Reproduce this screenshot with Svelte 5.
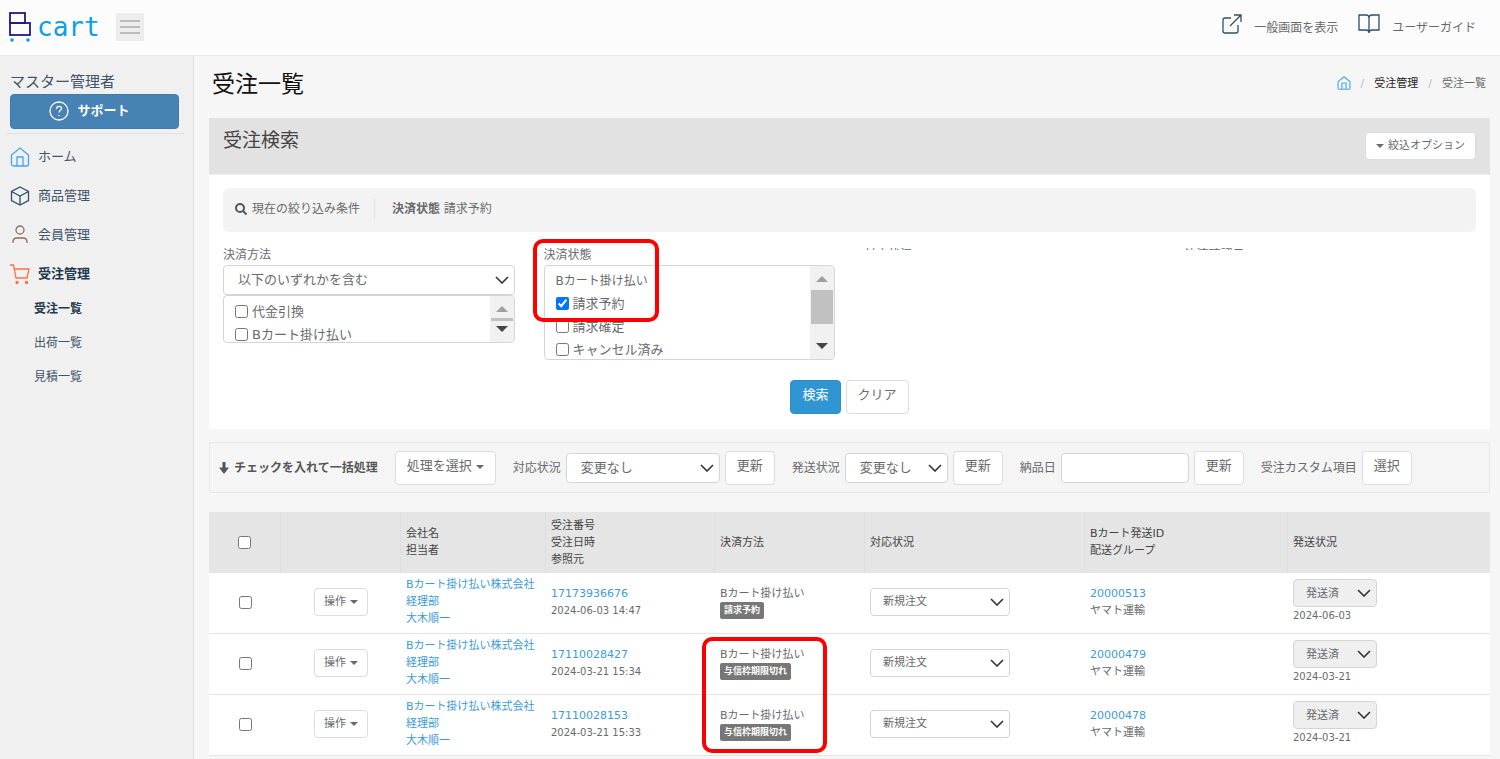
<script lang="ts">
  type Order = {
    id: string;
    orderedAt: string;
    badge: string;
    shippingId: string;
    shippedOn: string;
  };

  const orders: Order[] = [
    { id: '17173936676', orderedAt: '2024-06-03 14:47', badge: '請求予約', shippingId: '20000513', shippedOn: '2024-06-03' },
    { id: '17110028427', orderedAt: '2024-03-21 15:34', badge: '与信枠期限切れ', shippingId: '20000479', shippedOn: '2024-03-21' },
    { id: '17110028153', orderedAt: '2024-03-21 15:33', badge: '与信枠期限切れ', shippingId: '20000478', shippedOn: '2024-03-21' },
  ];

  const subMenu = ['受注一覧', '出荷一覧', '見積一覧'];

  let methods = $state([
    { label: '代金引換', checked: false },
    { label: 'Bカート掛け払い', checked: false },
  ]);
  let statuses = $state([
    { label: '請求予約', checked: true },
    { label: '請求確定', checked: false },
    { label: 'キャンセル済み', checked: false },
  ]);
</script>

{#snippet home()}
  <svg class="icon" viewBox="0 0 20 20" aria-hidden="true">
    <path d="M1.500 8 10 1l8.500 7v9a2 2 0 0 1-2 2h-13a2 2 0 0 1-2-2z" />
    <path d="M7 19v-9h6v9" />
  </svg>
{/snippet}

{#snippet chevron()}
  <svg class="chevron" viewBox="0 0 14 8" aria-hidden="true"><path d="M1 1l6 6 6-6" /></svg>
{/snippet}

{#snippet scrollbar(kind: string)}
  <div class="scrollbar" aria-hidden="true">
    <svg class="arrow up" viewBox="0 0 12 6"><path d="M0 6l6-6 6 6z" /></svg>
    <span class="thumb {kind}"></span>
    <svg class="arrow" viewBox="0 0 12 6"><path d="M0 0l6 6 6-6z" /></svg>
  </div>
{/snippet}

<div class="page">
  <header class="topbar">
    <a class="logo" href="#top" aria-label="Bcart">
      <svg class="logo-mark" viewBox="0 0 22 30" aria-hidden="true">
        <rect x="1" y="1" width="15" height="10" />
        <rect x="1" y="11" width="20" height="12" />
        <circle cx="3" cy="28" r="1.800" />
        <circle cx="19" cy="28" r="1.800" />
      </svg>
      <span>cart</span>
    </a>
    <button class="burger" aria-label="メニュー"><i></i><i></i><i></i></button>
    <nav class="top-links">
      <a href="#shop">
        <svg class="icon" viewBox="0 0 20 20" aria-hidden="true">
          <path d="M9 4H3a2 2 0 0 0-2 2v11a2 2 0 0 0 2 2h11a2 2 0 0 0 2-2v-6" />
          <path d="M8 12 19 1M12 1h7v7" />
        </svg>
        一般画面を表示
      </a>
      <a href="#guide">
        <svg class="icon book" viewBox="0 0 22 20" aria-hidden="true">
          <path d="M11 4c0-2-1-3-3-3H1v15h7c2 0 3 1 3 3 0-2 1-3 3-3h7V1h-7c-2 0-3 1-3 3zM11 4v15" />
        </svg>
        ユーザーガイド
      </a>
    </nav>
  </header>

  <div class="shell">
    <aside class="sidebar">
      <p class="account">マスター管理者</p>
      <button class="support">
        <svg class="icon" viewBox="0 0 20 20" aria-hidden="true">
          <circle cx="10" cy="10" r="9" />
          <path d="M7.500 8c0-3.500 5-3.500 5-.5 0 2-2.500 2-2.500 4M10 14v1" />
        </svg>
        サポート
      </button>
      <ul class="menu">
        <li><a class="home" href="#home">{@render home()}ホーム</a></li>
        <li>
          <a href="#products">
            <svg class="icon" viewBox="0 0 20 20" aria-hidden="true">
              <path d="M10 1l8.500 4.500v9L10 19l-8.500-4.500v-9zM1.500 5.500 10 10l8.500-4.500M10 10v9" />
            </svg>
            商品管理
          </a>
        </li>
        <li>
          <a class="members" href="#members">
            <svg class="icon" viewBox="0 0 20 20" aria-hidden="true">
              <circle cx="10" cy="5" r="4" />
              <path d="M3 18v-1c0-3 1.500-4 4-4h6c2.500 0 4 1 4 4v1" />
            </svg>
            会員管理
          </a>
        </li>
        <li>
          <a class="orders" href="#orders">
            <svg class="icon" viewBox="0 0 20 20" aria-hidden="true">
              <path d="M0 1h3.500l2.500 13h11l2-9H4.500" />
              <circle class="dot" cx="7" cy="18.500" r="1" />
              <circle class="dot" cx="16.500" cy="18.500" r="1" />
            </svg>
            受注管理
          </a>
          <ul class="submenu">
            {#each subMenu as item, i}
              <li><a href="#orders" class:current={i === 0}>{item}</a></li>
            {/each}
          </ul>
        </li>
      </ul>
    </aside>

    <main>
      <div class="title-row">
        <h1>受注一覧</h1>
        <nav class="breadcrumb">
          <a class="home" href="#home" aria-label="ホーム">{@render home()}</a>
          <span class="slash">/</span>
          <a class="parent" href="#orders">受注管理</a>
          <span class="slash">/</span>
          <span>受注一覧</span>
        </nav>
      </div>

      <section class="panel">
        <div class="panel-head">
          <h2>受注検索</h2>
          <button class="btn small option"><i class="caret"></i>絞込オプション</button>
        </div>
        <div class="panel-body">
          <div class="conditions">
            <svg class="search" viewBox="0 0 12 12" aria-hidden="true">
              <circle cx="5" cy="5" r="4" />
              <path d="M8 8l3.500 3.500" />
            </svg>
            <span class="current-label">現在の絞り込み条件</span>
            <span><b>決済状態</b> 請求予約</span>
          </div>

          <div class="fields">
            <div class="field">
              <label for="method">決済方法</label>
              <div class="select">
                <select id="method"><option>以下のいずれかを含む</option></select>
                {@render chevron()}
              </div>
              <div class="list short">
                <div class="options">
                  {#each methods as m}
                    <label><input type="checkbox" bind:checked={m.checked} />{m.label}</label>
                  {/each}
                </div>
                {@render scrollbar('thin')}
              </div>
            </div>
            <div class="field" role="group" aria-labelledby="status-label">
              <span id="status-label" class="label">決済状態</span>
              <div class="list tall">
                <div class="options">
                  <p>Bカート掛け払い</p>
                  {#each statuses as s}
                    <label><input type="checkbox" bind:checked={s.checked} />{s.label}</label>
                  {/each}
                </div>
                {@render scrollbar('thick')}
              </div>
              <span class="marker filter-marker"></span>
            </div>
            <div class="field folded"><span class="label">対応状況</span></div>
            <div class="field folded"><span class="label">決済確認日</span></div>
          </div>

          <div class="actions">
            <button class="btn primary">検索</button>
            <button class="btn">クリア</button>
          </div>
        </div>
      </section>

      <section class="batch">
        <strong>
          <svg class="down" viewBox="0 0 10 12" aria-hidden="true"><path d="M3.500 0h3v5.500H10L5 12 0 5.500h3.500z" /></svg>
          チェックを入れて一括処理
        </strong>
        <button class="btn">処理を選択<i class="caret"></i></button>
        <div class="group">
          <label for="batch-status">対応状況</label>
          <div class="select wide">
            <select id="batch-status"><option>変更なし</option></select>
            {@render chevron()}
          </div>
          <button class="btn">更新</button>
        </div>
        <div class="group">
          <label for="batch-shipping">発送状況</label>
          <div class="select medium">
            <select id="batch-shipping"><option>変更なし</option></select>
            {@render chevron()}
          </div>
          <button class="btn">更新</button>
        </div>
        <div class="group">
          <label for="batch-date">納品日</label>
          <input id="batch-date" type="text" />
          <button class="btn">更新</button>
        </div>
        <div class="group">
          <span>受注カスタム項目</span>
          <button class="btn">選択</button>
        </div>
      </section>

      <table>
        <colgroup>
          <col class="c-check" />
          <col class="c-action" />
          <col class="c-company" />
          <col class="c-number" />
          <col class="c-payment" />
          <col class="c-status" />
          <col class="c-shipping" />
          <col />
        </colgroup>
        <thead>
          <tr>
            <th class="center"><input type="checkbox" aria-label="すべて選択" /></th>
            <th></th>
            <th>会社名<br />担当者</th>
            <th>受注番号<br />受注日時<br />参照元</th>
            <th>決済方法</th>
            <th>対応状況</th>
            <th>Bカート発送ID<br />配送グループ</th>
            <th>発送状況</th>
          </tr>
        </thead>
        <tbody>
          {#each orders as order, i}
            <tr>
              <td class="center"><input type="checkbox" aria-label={order.id} /></td>
              <td class="center"><button class="btn small">操作<i class="caret"></i></button></td>
              <td>
                <a href="#company">Bカート掛け払い株式会社<br />経理部</a><br />
                <a href="#person">大木順一</a>
              </td>
              <td><a href="#order">{order.id}</a><br /><span class="date">{order.orderedAt}</span></td>
              <td>
                Bカート掛け払い
                <span class="badge">{order.badge}</span>
                {#if i === 1}<span class="marker row-marker"></span>{/if}
              </td>
              <td>
                <div class="select small status">
                  <select aria-label="対応状況"><option>新規注文</option></select>
                  {@render chevron()}
                </div>
              </td>
              <td><a href="#shipping">{order.shippingId}</a><br />ヤマト運輸</td>
              <td>
                <div class="select small shipped">
                  <select aria-label="発送状況"><option>発送済</option></select>
                  {@render chevron()}
                </div>
                <span class="date">{order.shippedOn}</span>
              </td>
            </tr>
          {/each}
        </tbody>
      </table>
    </main>
  </div>
</div>

<style>
  :global(body) {
    margin: 0;
    background: #f6f6f6;
    color: #676a6c;
    font: 12px/20px "DejaVu Sans", "Noto Sans CJK JP", sans-serif;
  }

  .page {
    display: flex;
    flex-direction: column;
    min-height: 100vh;
  }

  button, select, input {
    box-sizing: border-box;
    margin: 0;
    font: inherit;
    color: inherit;
  }
  button {
    cursor: pointer;
  }
  a {
    color: inherit;
    text-decoration: none;
  }
  h1, h2, p, ul {
    margin: 0;
    padding: 0;
    font-weight: 400;
    list-style: none;
  }
  input[type='checkbox'] {
    width: 13px;
    height: 13px;
  }

  .icon {
    flex: none;
    width: 20px;
    height: 20px;
    fill: none;
    stroke: #2f4f6b;
    stroke-width: 1.3;
    overflow: visible;
  }

  /* top bar */
  .topbar {
    display: flex;
    align-items: center;
    box-sizing: border-box;
    height: 56px;
    padding: 0 24px 2px 9px;
    background: #fcfcfc;
    border-bottom: 1px solid #e7e7e7;
  }
  .logo {
    display: flex;
    align-items: center;
    gap: 6px;
    margin-right: 16px;
    color: #0b9fe8;
    font: 26px/30px "DejaVu Sans Mono", monospace;
  }
  .logo-mark {
    width: 22px;
    height: 30px;
    fill: #0b9fe8;
  }
  .logo-mark rect {
    fill: none;
    stroke: #1d1b84;
    stroke-width: 1.8;
  }
  .burger {
    display: flex;
    flex-direction: column;
    justify-content: center;
    gap: 4px;
    width: 28px;
    height: 28px;
    padding: 0 4px;
    border: 0;
    background: #ededed;
  }
  .burger i {
    height: 2px;
    background: #bbb;
  }
  .top-links {
    display: flex;
    gap: 20px;
    margin-left: auto;
  }
  .top-links a {
    display: flex;
    align-items: flex-end;
    gap: 12px;
    padding-bottom: 4px;
    line-height: 16px;
  }
  .top-links .icon {
    margin-bottom: 2px;
  }
  .icon.book {
    width: 22px;
  }

  .shell {
    display: flex;
    flex: 1;
  }

  /* sidebar */
  .sidebar {
    box-sizing: border-box;
    flex: none;
    width: 194px;
    padding: 14px 10px 0;
    background: #f0f0f0;
    border-right: 1px solid #e2e2e2;
    color: #405468;
    font-size: 13px;
  }
  .account {
    font-size: 15px;
    line-height: 24px;
  }
  .support {
    display: flex;
    align-items: center;
    justify-content: center;
    gap: 8px;
    width: 169px;
    height: 35px;
    padding: 0 10px 1px 0;
    border: 1px solid #3f7aab;
    border-radius: 4px;
    background: #4682b4;
    color: #fff;
    font-weight: 700;
  }
  .support .icon {
    stroke: #fff;
  }
  .menu {
    margin: 4px -1px 0 -5px;
    padding: 3px 5px 0;
    border-top: 1px solid #e2e2e2;
  }
  .menu > li > a {
    display: flex;
    align-items: center;
    gap: 8px;
    height: 39px;
  }
  .home .icon {
    stroke: #45a5ee;
  }
  .members .icon {
    stroke: #8d6e63;
  }
  .orders {
    color: #22384d;
    font-weight: 700;
  }
  .orders .icon {
    stroke: #ff7043;
  }
  .dot {
    fill: #ff7043;
  }
  .submenu {
    display: grid;
    gap: 2px;
    padding-left: 24px;
    font-size: 12px;
    line-height: 32px;
  }
  .current {
    color: #22384d;
    font-weight: 700;
  }

  main {
    flex: 1;
    min-width: 0;
    padding: 0 10px 3px 15px;
  }
  .title-row {
    display: flex;
    align-items: center;
    justify-content: space-between;
    padding: 12px 4px 18px 3px;
  }
  h1 {
    color: #111;
    font-size: 23px;
    line-height: 32px;
  }
  .breadcrumb {
    display: flex;
    align-items: center;
    gap: 10px;
    font-size: 11px;
  }
  .breadcrumb .icon {
    display: block;
    width: 14px;
    height: 14px;
    margin-bottom: 2px;
    stroke-width: 1.6;
  }
  .slash {
    color: #bbb;
  }
  .parent {
    color: #222;
  }

  .btn {
    height: 34px;
    padding: 0 11px 4px;
    border: 1px solid #dcdcdc;
    border-radius: 4px;
    background: #fff;
    font-size: 13px;
    white-space: nowrap;
  }
  .btn.small {
    height: 28px;
    padding: 0 9px;
    font-size: 11px;
  }
  .btn.primary {
    border-color: #2b8dcb;
    background: #3096d3;
    color: #fff;
  }
  .caret {
    display: inline-block;
    margin-left: 4px;
    border: 4px solid transparent;
    border-top-color: currentColor;
    border-bottom: 0;
    vertical-align: 1px;
  }

  .select {
    display: grid;
    align-items: center;
  }
  .select select {
    grid-area: 1 / 1;
    width: 100%;
    height: 30px;
    padding: 0 28px 0 14px;
    border: 1px solid #d5d5d5;
    border-radius: 4px;
    background: #fff;
    font-size: 13px;
    appearance: none;
  }
  .chevron {
    grid-area: 1 / 1;
    justify-self: end;
    width: 14px;
    height: 8px;
    margin-right: 6px;
    fill: none;
    stroke: #333;
    stroke-width: 1.6;
    pointer-events: none;
  }
  .select.wide {
    width: 154px;
  }
  .select.medium {
    width: 103px;
  }
  .select.small select {
    height: 28px;
    padding-left: 12px;
    font-size: 11px;
  }
  .select.status {
    width: 140px;
  }
  .select.shipped {
    width: 84px;
  }
  .select.shipped select {
    background: #efefef;
  }

  /* search panel */
  .panel {
    background: #fff;
  }
  .panel-head {
    display: flex;
    align-items: flex-start;
    justify-content: space-between;
    padding: 8px 14px 14px;
    background: #e2e2e2;
    border-bottom: 1px solid #eee;
  }
  h2 {
    color: #444;
    font-size: 19px;
    line-height: 28px;
  }
  .btn.option {
    margin-top: 6px;
    padding: 0 10px;
  }
  .option .caret {
    margin: 0 4px 0 0;
  }
  .panel-body {
    padding: 13px 14px 15px;
  }
  .conditions {
    display: flex;
    align-items: center;
    height: 42px;
    padding: 0 12px 2px;
    border-radius: 6px;
    background: #f3f3f3;
  }
  .search {
    width: 12px;
    height: 12px;
    margin-right: 5px;
    fill: none;
    stroke: #555;
    stroke-width: 2;
  }
  .current-label {
    margin-right: 17px;
    padding-right: 14px;
    border-right: 1px solid #e2e2e2;
  }
  .fields {
    display: grid;
    grid-template-columns: repeat(4, 1fr);
    gap: 29px;
    padding-top: 12px;
  }
  .field {
    position: relative;
  }
  .field > label, .label {
    display: block;
    height: 21px;
    line-height: 22px;
  }
  .folded {
    height: 6px;
    overflow: hidden;
  }
  .list {
    display: flex;
    box-sizing: border-box;
    overflow: hidden;
    border: 1px solid #d5d5d5;
    border-radius: 4px;
    font-size: 13px;
  }
  .short {
    height: 48px;
  }
  .tall {
    height: 95px;
  }
  .options {
    flex: 1;
    padding: 4px 11px;
  }
  .options p {
    font-size: 12px;
    line-height: 22px;
  }
  .options label {
    display: flex;
    align-items: center;
    gap: 4px;
    height: 23px;
  }
  .scrollbar {
    display: flex;
    flex-direction: column;
    align-items: center;
    justify-content: space-between;
    width: 24px;
    padding: 10px 0;
    background: #f1f1f1;
  }
  .arrow {
    width: 12px;
    height: 6px;
    fill: #444;
  }
  .arrow.up {
    fill: #a0a0a0;
  }
  .thumb {
    width: 22px;
    background: #c1c1c1;
  }
  .thumb.thin {
    height: 3px;
  }
  .thumb.thick {
    height: 34px;
    margin-bottom: 12px;
  }
  .actions {
    display: flex;
    justify-content: center;
    gap: 5px;
    margin-top: 20px;
  }

  .marker {
    position: absolute;
    z-index: 1;
    box-sizing: border-box;
    border: 4px solid #f00;
    border-radius: 10px;
    pointer-events: none;
  }
  .filter-marker {
    top: -5px;
    left: -11px;
    width: 126px;
    height: 83px;
  }
  .row-marker {
    top: 3px;
    left: -13px;
    width: 125px;
    height: 116px;
  }

  /* batch operations */
  .batch {
    display: flex;
    align-items: center;
    gap: 17px;
    box-sizing: border-box;
    height: 51px;
    margin: 13px 0 19px;
    padding: 0 9px;
    border: 1px solid #e7e7e7;
    border-radius: 2px;
    background: #f5f5f5;
    white-space: nowrap;
  }
  .batch strong, .group {
    display: flex;
    align-items: center;
    gap: 5px;
  }
  .batch strong {
    color: #555;
  }
  .down {
    width: 10px;
    height: 12px;
    fill: #555;
  }
  .batch input {
    width: 128px;
    height: 30px;
    border: 1px solid #d5d5d5;
    border-radius: 4px;
    background: #fff;
  }

  /* orders */
  table {
    width: 100%;
    border-collapse: separate;
    border-spacing: 0;
    table-layout: fixed;
    background: #fff;
    font-size: 11px;
    line-height: 17px;
  }
  .c-check { width: 72px; }
  .c-action { width: 120px; }
  .c-company { width: 145px; }
  .c-number { width: 169px; }
  .c-payment { width: 150px; }
  .c-status { width: 220px; }
  .c-shipping { width: 203px; }
  th {
    box-sizing: border-box;
    height: 61px;
    padding: 0 5px 1px;
    border-right: 1px solid #dedede;
    background: #e5e5e5;
    color: #444;
    font-weight: 400;
    text-align: left;
  }
  th:last-child {
    border-right: 0;
  }
  td {
    position: relative;
    box-sizing: border-box;
    height: 61px;
    padding: 3px 5px 6px;
    border-bottom: 1px solid #e5e5e5;
    white-space: nowrap;
  }
  .center {
    text-align: center;
  }
  .center input {
    vertical-align: middle;
  }
  td a {
    color: #3d9bd6;
  }
  .date {
    font-size: 10px;
  }
  .badge {
    display: block;
    width: fit-content;
    padding: 0 4px;
    border-radius: 2px;
    background: #777;
    color: #fff;
    font-size: 9px;
    font-weight: 700;
  }
</style>
